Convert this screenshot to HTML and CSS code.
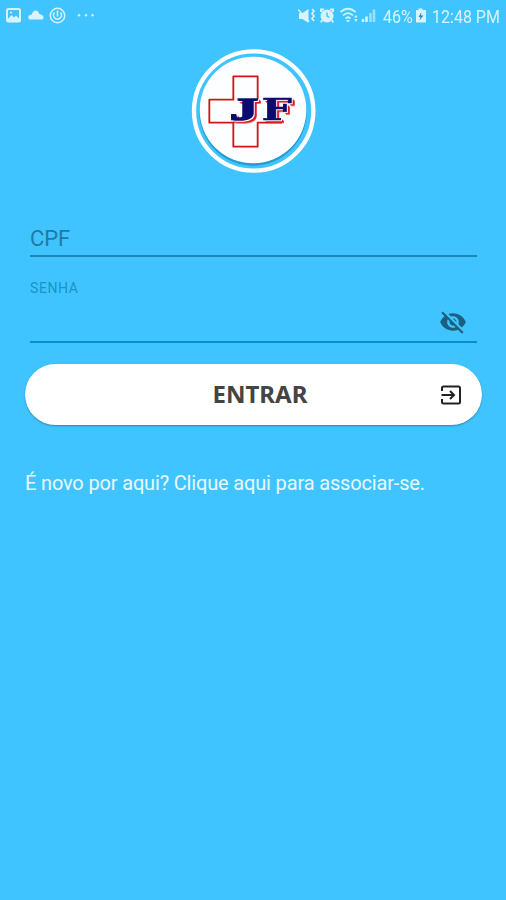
FILE: index.html
```html
<!DOCTYPE html>
<html lang="pt-BR">
<head>
<meta charset="utf-8">
<meta name="viewport" content="width=device-width">
<title>Entrar</title>
<link rel="stylesheet" href="styles.css">
</head>
<body>
<header class="status">
  <svg class="status-left" width="100" height="32" viewBox="0 0 100 32" fill="none" stroke="#d8f3ff">
    <rect x="7" y="9" width="13" height="12.500" rx="1.500" stroke-width="2"/>
    <path d="M8 19l3.500-4 2.500 2.500 2-2 3.500 3.500v2H8z" fill="#d8f3ff" stroke="none"/>
    <circle cx="11" cy="12.500" r="1" fill="#d8f3ff" stroke="none"/>
    <path d="M29.500 19.500a2.500 2.500 0 0 1 .3-4.500l2-.5q1-4 4-4 2.500 0 3.500 3.500 3 .3 4 2.500 1 2-1 3z" fill="#d8f3ff" stroke="none"/>
    <circle cx="57.500" cy="15.500" r="7.200" stroke-width="1.500"/>
    <path d="M54.500 12.500a4 4 0 1 0 6 0M57.500 10.500v6" stroke-width="1.600"/>
    <g fill="#d8f3ff" stroke="none"><circle cx="79" cy="15.300" r="1.200"/><circle cx="86" cy="15.300" r="1.200"/><circle cx="92.500" cy="15.300" r="1.200"/></g>
  </svg>
  <div class="status-right">
    <svg width="82" height="32" viewBox="0 0 82 32" fill="none" stroke="#d8f3ff">
      <path d="M1 13h3.500l6-4v14l-6-4H1z" fill="#d8f3ff" stroke="none"/>
      <path d="M0 9.500l11 12" stroke-width="1.500"/>
      <path d="M14 9l2 2-2 2.500 2 2.500-2 2.500 2 2.500" stroke-width="1.600"/>
      <circle cx="29" cy="16" r="6.500" fill="#d8f3ff" stroke="none"/>
      <path d="M23 12v-2.500h3M32 9.500h3V12M24 20l-1 2.500M34 20l1 2.500" stroke-width="2"/>
      <path d="M29 12.500V16l2.500 1.500" stroke="#40c4ff" stroke-width="1.400"/>
      <path d="M42.500 12q7.500-6.500 15 0M45 15.500q5-5 10 0M47.500 18.500q2.500-2.500 5 0" stroke-width="1.700"/>
      <path d="M48 20h4l-2 2.500zM56 17.500l2-2.500 1.500 2.500zM56 19h3.500l-1.500 3z" fill="#d8f3ff" stroke="none"/>
      <path d="M65 22v-3M68.500 22v-5.500" stroke-width="2.500"/>
      <path d="M72.500 22v-9M76 22V9.500" stroke-width="2.500" opacity=".6"/>
    </svg>
    <span class="percent">46%</span>
    <svg class="battery" width="12" height="32" viewBox="0 0 12 32">
      <path d="M3.500 8.500h4V10H11v12.500H1V10h2.500z" fill="#d8f3ff"/>
      <path d="M6.500 12L3.500 17h2l-1 3.500L8.500 15.500H6z" fill="#258fbd"/>
    </svg>
    <span class="clock">12:48 PM</span>
  </div>
</header>
<main class="login">
  <svg class="logo" width="140" height="140" viewBox="0 0 420 420">
    <circle cx="212" cy="207" r="179" fill="none" stroke="#fff" stroke-width="13"/>
    <circle cx="210" cy="210" r="161" fill="#239bd0"/>
    <circle cx="210" cy="204" r="160" fill="#fdfeff"/>
    <path d="M224 173V103H151V173H79V242H151V314H224V242H297" fill="none" stroke="#cf1717" stroke-width="5.500" stroke-linejoin="round"/>
    <g class="monogram">
      <text class="j" x="141" y="234" textLength="84" lengthAdjust="spacingAndGlyphs">J</text>
      <text class="f" x="236" y="235" textLength="90" lengthAdjust="spacingAndGlyphs">F</text>
    </g>
  </svg>
  <form class="form">
    <div class="field cpf"><span>CPF</span></div>
    <div class="field senha">
      <span>SENHA</span>
      <svg class="eye" width="28" height="28" viewBox="0 0 24 24"><path fill="#1b607f" d="M12 7c2.760 0 5 2.240 5 5 0 .65-.13 1.260-.36 1.830l2.920 2.920c1.510-1.260 2.700-2.890 3.430-4.750-1.730-4.390-6-7.500-11-7.500-1.400 0-2.740.25-3.980.7l2.160 2.160C10.740 7.130 11.350 7 12 7zM2 4.270l2.280 2.280.46.46C3.080 8.300 1.780 10.020 1 12c1.730 4.390 6 7.500 11 7.500 1.550 0 3.030-.3 4.380-.84l.42.42L19.730 22 21 20.730 3.270 3 2 4.270zM7.530 9.800l1.550 1.550c-.05.21-.08.43-.08.65 0 1.660 1.340 3 3 3 .22 0 .44-.03.65-.08l1.550 1.550c-.67.33-1.410.53-2.200.53-2.760 0-5-2.240-5-5 0-.79.2-1.530.53-2.200zm4.310-.78l3.150 3.150.02-.16c0-1.660-1.340-3-3-3l-.17.01z"/></svg>
    </div>
    <button class="submit" type="button">
      <span>ENTRAR</span>
      <svg width="24" height="24" viewBox="0 0 24 24" fill="none" stroke="#222"><path d="M3 8V5q0-1.500 1.500-1.500h15Q21 3.500 21 5v14q0 1.500-1.500 1.500h-15Q3 20.500 3 19v-3" stroke-width="2"/><path d="M2.500 12h12M11 8l4 4-4 4" stroke-width="2"/></svg>
    </button>
  </form>
  <p class="join"><span>É novo por aqui? Clique aqui para associar-se.</span></p>
</main>
</body>
</html>
```
FILE: styles.css
```css
* { box-sizing: border-box; }
body {
  margin: 0;
  height: 900px;
  overflow: hidden;
  background: #40c4ff;
  font-family: Roboto, sans-serif;
}
svg { display: block; flex: none; }
.status { height: 32px; display: flex; justify-content: space-between; color: #d8f3ff; }
.status-right { display: flex; width: 208px; font-size: 18px; line-height: 33px; white-space: nowrap; }
.status-right span { transform: scaleX(.89); transform-origin: left; }
.percent { width: 35px; margin-left: 3px; }
.battery { margin-left: -1px; }
.clock { margin-left: 5px; }
.login { display: flex; flex-direction: column; padding: 10px 25px 0; }
.logo { margin-left: 158px; }
.monogram { font-weight: bold; fill: #0c0c70; stroke: #0c0c70; filter: drop-shadow(3px 3px 0 #fff) drop-shadow(6px 5px 0 #d81c24); }
.j { font-family: "Liberation Serif", serif; font-size: 95px; stroke-width: 5px; }
.f { font-family: "DejaVu Serif", serif; font-size: 87px; stroke-width: 2px; }
.field { margin: 0 4px 0 5px; display: flex; justify-content: space-between; }
.cpf { height: 75px; border-bottom: 2px solid #1c88b8; color: #217ba1; font-size: 22px; line-height: 26px; padding-top: 44px; letter-spacing: -.1px; }
.senha { height: 86px; border-bottom: 2px solid #078fc8; color: #1695c7; font-size: 14px; line-height: 18px; padding-top: 22px; letter-spacing: .6px; }
.eye { margin: 29px 10px 0 0; }
.submit {
  width: 457px; height: 61px; margin-top: 21px; padding: 0 19px 0 56px;
  display: flex; align-items: center; border: 0; border-radius: 31px;
  background: #fff; box-shadow: 0 1px 2px #2687b4;
  color: #444; font-family: "Noto Sans", sans-serif; font-size: 24px; font-weight: 700;
}
.submit span { flex: 1; text-align: center; margin-top: -2px; }
.join { margin: 45px 0 0; color: #e8f8ff; font-size: 20px; line-height: 26px; letter-spacing: -.16px; white-space: nowrap; }
```
